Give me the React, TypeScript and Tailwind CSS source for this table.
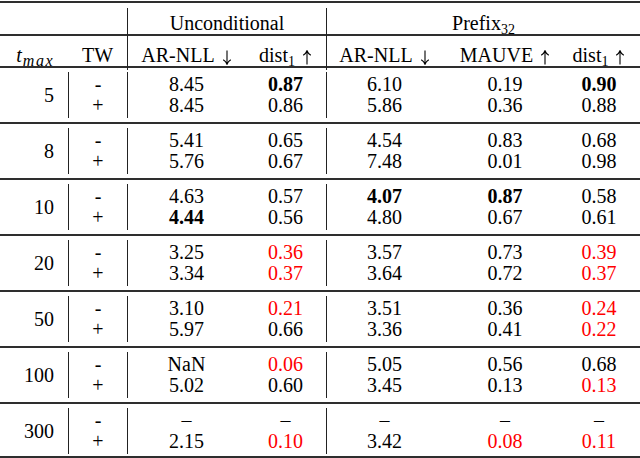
const cols = 'grid grid-cols-[68px_59px_118px_81px_116px_126px_72px]'

// '*' = bold, '!' = red
const groups: { t: string; rows: string[][] }[] = [
  { t: '5', rows: [['-', '8.45', '*0.87', '6.10', '0.19', '*0.90'], ['+', '8.45', '0.86', '5.86', '0.36', '0.88']] },
  { t: '8', rows: [['-', '5.41', '0.65', '4.54', '0.83', '0.68'], ['+', '5.76', '0.67', '7.48', '0.01', '0.98']] },
  { t: '10', rows: [['-', '4.63', '0.57', '*4.07', '*0.87', '0.58'], ['+', '*4.44', '0.56', '4.80', '0.67', '0.61']] },
  { t: '20', rows: [['-', '3.25', '!0.36', '3.57', '0.73', '!0.39'], ['+', '3.34', '!0.37', '3.64', '0.72', '!0.37']] },
  { t: '50', rows: [['-', '3.10', '!0.21', '3.51', '0.36', '!0.24'], ['+', '5.97', '0.66', '3.36', '0.41', '!0.22']] },
  { t: '100', rows: [['-', 'NaN', '!0.06', '5.05', '0.56', '0.68'], ['+', '5.02', '0.60', '3.45', '0.13', '!0.13']] },
  { t: '300', rows: [['-', '–', '–', '–', '–', '–'], ['+', '2.15', '!0.10', '3.42', '!0.08', '!0.11']] },
]

function Rule() {
  return <div className="h-[2px] bg-[#2e2e2e]" />
}

// thin math-style arrow, like \uparrow / \downarrow
function Arrow({ up }: { up?: boolean }) {
  return (
    <svg width="10" height="15" viewBox="0 0 10 15" className="inline-block ml-[7px] -mb-[1px]">
      {up ? (
        <path d="M5 14.5V1M1.2 5.2Q4 3.6 5 0.8Q6 3.6 8.8 5.2" fill="none" stroke="#000" strokeWidth="1.1" />
      ) : (
        <path d="M5 0.5V14M1.2 9.8Q4 11.4 5 14.2Q6 11.4 8.8 9.8" fill="none" stroke="#000" strokeWidth="1.1" />
      )}
    </svg>
  )
}

function Val({ v }: { v: string }) {
  if (v.startsWith('*')) return <span className="font-bold">{v.slice(1)}</span>
  if (v.startsWith('!')) return <span className="text-[#ff0000]">{v.slice(1)}</span>
  return <span>{v}</span>
}

function Group({ t, rows, last }: { t: string; rows: string[][]; last: boolean }) {
  const cellClass = [
    'border-l border-[#222]',
    'border-l border-[#222]',
    '',
    'border-l border-[#222]',
    '',
    'pr-[10px]',
  ]
  return (
    <div className={`${cols} pt-[4px] ${last ? 'pb-[2px]' : 'pb-[4px]'}`}>
      <div className="flex items-center justify-end pr-[14px]">{t}</div>
      {cellClass.map((c, i) => (
        <div key={i} className={`flex flex-col items-center py-[2px] ${c}`}>
          {rows.map((r, j) => (
            <div key={j} className="h-[21px] leading-[21px]">
              <Val v={r[i]} />
            </div>
          ))}
        </div>
      ))}
    </div>
  )
}

export default function App() {
  return (
    <div
      className="w-[640px] h-[458px] overflow-hidden bg-white text-black text-[20px] pt-[1px]"
      style={{ fontFamily: '"Liberation Serif", "Times New Roman", serif' }}
    >
      <Rule />
      <div className={`${cols} h-[31px]`}>
        <div className="col-span-2" />
        <div className="col-span-2 border-l border-[#222] mt-[5px] mb-[2px] flex items-center justify-center">
          Unconditional
        </div>
        <div className="col-span-3 border-l border-[#222] mt-[5px] mb-[2px] flex items-center justify-center">
          <span>
            Prefix<sub className="text-[14px]">32</sub>
          </span>
        </div>
      </div>
      <Rule />
      <div className={`${cols} h-[30px]`}>
        <div className="flex items-center justify-end pr-[14px] pt-[3px]">
          <span className="italic">
            t<sub className="text-[16px] tracking-[1.5px] ml-[1px]">max</sub>
          </span>
        </div>
        <div className="flex items-center justify-center pt-[3px]">TW</div>
        <div className="border-l border-[#222] mt-[2px] mb-[1px] flex items-center justify-center pt-[2px]">
          <span>
            AR-NLL
            <Arrow />
          </span>
        </div>
        <div className="flex items-center justify-center pt-[3px]">
          <span>
            dist<sub className="text-[14px]">1</sub>
            <Arrow up />
          </span>
        </div>
        <div className="border-l border-[#222] mt-[2px] mb-[1px] flex items-center justify-center pt-[2px]">
          <span>
            AR-NLL
            <Arrow />
          </span>
        </div>
        <div className="flex items-center justify-center pt-[3px]">
          <span>
            MAUVE
            <Arrow up />
          </span>
        </div>
        <div className="flex items-center justify-center pt-[3px] pr-[10px]">
          <span>
            dist<sub className="text-[14px]">1</sub>
            <Arrow up />
          </span>
        </div>
      </div>
      <Rule />
      {groups.map((g, i) => (
        <div key={g.t}>
          <Group t={g.t} rows={g.rows} last={i === groups.length - 1} />
          <Rule />
        </div>
      ))}
    </div>
  )
}
